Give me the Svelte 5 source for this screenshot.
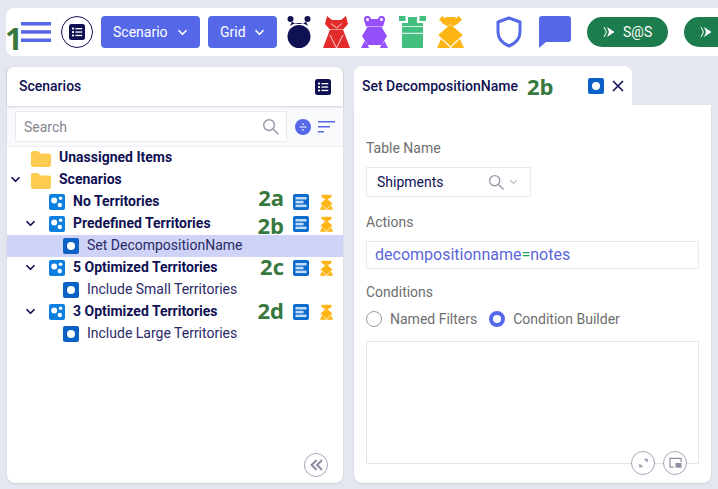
<script>
  const rows = [
    { label: 'Unassigned Items', kind: 'folder', level: 0, bold: true },
    { label: 'Scenarios', kind: 'folder', level: 0, bold: true, open: true },
    { label: 'No Territories', kind: 'group', level: 1, bold: true, tools: true, tag: '2a' },
    { label: 'Predefined Territories', kind: 'group', level: 1, bold: true, open: true, tools: true, tag: '2b' },
    { label: 'Set DecompositionName', kind: 'item', level: 2, selected: true },
    { label: '5 Optimized Territories', kind: 'group', level: 1, bold: true, open: true, tools: true, tag: '2c' },
    { label: 'Include Small Territories', kind: 'item', level: 2 },
    { label: '3 Optimized Territories', kind: 'group', level: 1, bold: true, open: true, tools: true, tag: '2d' },
    { label: 'Include Large Territories', kind: 'item', level: 2 }
  ];
</script>

{#snippet chevron(cls)}
  <svg class={cls} viewBox="0 0 12 8" fill="none" stroke="currentColor" stroke-width="2" stroke-linecap="round" stroke-linejoin="round"><path d="M2 2l4 4 4-4" /></svg>
{/snippet}

{#snippet search(cls)}
  <svg class={cls} viewBox="0 0 18 18" fill="none" stroke="#9b9aa8" stroke-width="1.6" stroke-linecap="round"><circle cx="7.5" cy="7.5" r="5.7" /><path d="M12 12l5 5" /></svg>
{/snippet}

{#snippet listIcon(cls)}
  <svg class={cls} viewBox="0 0 16 16"><rect width="16" height="16" rx="2.5" fill="#0f1153" /><g fill="#fff"><rect x="3" y="3.6" width="2" height="2" rx=".6" /><rect x="3" y="7" width="2" height="2" rx=".6" /><rect x="3" y="10.4" width="2" height="2" rx=".6" /><rect x="6.4" y="4" width="6.8" height="1.3" /><rect x="6.4" y="7.4" width="6.8" height="1.3" /><rect x="6.4" y="10.8" width="6.8" height="1.3" /></g></svg>
{/snippet}

{#snippet orangeFrog(cls)}
  <svg class={cls} viewBox="0 0 27 32" fill="#fdb515">
    <polygon points="5.500,0 9,3.500 5.500,7 2,3.500" />
    <polygon points="21.500,0 25,3.500 21.500,7 18,3.500" />
    <polygon points="9,1 18,1 22,7 13.500,12 5,7" />
    <polygon points="13.500,8 26,19 13.500,30.500 1,19" stroke="#fff" stroke-width=".5" />
    <polygon points="4,23 12.800,31.200 12.800,32 0,32" />
    <polygon points="23,23 14.200,31.200 14.200,32 27,32" />
  </svg>
{/snippet}

{#snippet itemIcon()}
  <svg class="node" viewBox="0 0 16 16"><rect width="16" height="16" rx="2" fill="#0b62c4" /><circle cx="8" cy="8" r="4" fill="#fff" /></svg>
{/snippet}

{#snippet groupIcon()}
  <svg class="node" viewBox="0 0 16 16"><rect width="16" height="16" rx="2" fill="#0b7fe0" /><circle cx="5.2" cy="6.600" r="3" fill="#fff" /><circle cx="11.600" cy="4.200" r="1.800" fill="#fff" /><circle cx="10.800" cy="11" r="2.200" fill="#fff" /></svg>
{/snippet}

{#snippet folderIcon()}
  <svg class="folder" viewBox="0 0 20 16"><path d="M0 2a2 2 0 0 1 2-2h5l2.500 2.500H18a2 2 0 0 1 2 2V14a2 2 0 0 1-2 2H2a2 2 0 0 1-2-2z" fill="#fdcb4f" /></svg>
{/snippet}

{#snippet playIcon()}
  <svg class="play" viewBox="0 0 12 12" fill="#fff"><path d="M4 1l7.500 5L4 11l2-5z" /><path d="M1 1l2.500 5L1 11" fill="none" stroke="#fff" /></svg>
{/snippet}

<div class="page">
  <header class="topbar">
    <svg class="burger" viewBox="0 0 30 20" fill="#5568e8"><rect width="30" height="3.500" /><rect y="8.200" width="30" height="3.500" /><rect y="16.500" width="30" height="3.500" /></svg>
    <span class="list-circle">{@render listIcon('list-lg')}</span>
    <button class="drop scenario">Scenario {@render chevron('drop-chev')}</button>
    <button class="drop grid-btn">Grid {@render chevron('drop-chev')}</button>

    <svg class="piece first" viewBox="0 0 26 32" fill="#0f1153">
      <circle cx="4.500" cy="3" r="3" />
      <circle cx="21.500" cy="3" r="3" />
      <path d="M6 5.500c2 2 4.500 2.500 7 2.500s5-.5 7-2.500l2 4.500c-2.500-2-5.500-3-9-3s-6.500 1-9 3z" />
      <circle cx="13" cy="20.500" r="11.500" />
    </svg>
    <svg class="piece" viewBox="0 0 27 32">
      <polygon fill="#e32b2b" points="4,0 9,4 18,4 23,0 25,8 20.500,13 6.500,13 2,8" />
      <polygon fill="#e32b2b" points="7,13.600 20,13.600 27,32 0,32" />
      <path d="M8 7.500l5.500 4.500 5.500-4.500M7 19l6.500 13 6.500-13" fill="none" stroke="#fff" stroke-width=".8" />
    </svg>
    <svg class="piece" viewBox="0 0 27 32" fill="#9650fb">
      <path d="M3 4a3.500 3.500 0 0 1 7-1h7a3.500 3.500 0 0 1 7 1l-2 6.500H5z" />
      <circle cx="6.500" cy="3.500" r="1.500" fill="#fff" />
      <circle cx="20.500" cy="3.500" r="1.500" fill="#fff" />
      <polygon points="6.500,11 20.500,11 26,20 20.500,29 6.500,29 1,20" />
      <polygon points="3.500,25 7,29.500 8,32 0,32" />
      <polygon points="23.500,25 20,29.500 19,32 27,32" />
    </svg>
    <svg class="piece" viewBox="0 0 27 32" fill="#43bf80"><rect width="6.500" height="5" /><rect x="9" y="1" width="9" height="6" /><rect x="20.500" width="6.500" height="5" /><rect x="3" y="7" width="21" height="3" /><rect x="3" y="10.800" width="21" height="6" /><rect x="3" y="17.800" width="21" height="14.200" /></svg>
    {@render orangeFrog('piece')}

    <svg class="shield" viewBox="0 0 26 32" fill="none" stroke="#5568e8" stroke-width="3"><path d="M13 2l11 4v10c0 7-5 11.500-11 14C7 27.500 2 23 2 16V6z" stroke-linejoin="round" /></svg>
    <svg class="chat" viewBox="0 0 32 32" fill="#5568e8"><path d="M3 0h26a3 3 0 0 1 3 3v20a3 3 0 0 1-3 3H7l-7 6V3a3 3 0 0 1 3-3z" /></svg>

    <button class="pill">{@render playIcon()} S@S</button>
    <button class="pill" aria-label="S@S">{@render playIcon()}</button>
    <span class="note note-1">1</span>
  </header>

  <main class="main">
    <section class="left">
      <div class="left-head">
        <h2>Scenarios</h2>
        {@render listIcon('list-sm')}
      </div>
      <div class="search-row">
        <div class="search-box">
          <span>Search</span>
          {@render search('search-ico')}
        </div>
        <svg class="expand" viewBox="0 0 16 16"><circle cx="8" cy="8" r="8" fill="#5568e8" /><path d="M4.500 8h7" stroke="#fff" /><path d="M6.500 5.500L8 4l1.500 1.500zM6.500 10.500L8 12l1.500-1.500z" fill="#fff" /></svg>
        <svg class="sort" viewBox="0 0 17 12" fill="#5568e8"><rect width="17" height="1.500" /><rect y="5" width="12" height="1.500" /><rect y="10" width="6" height="1.500" /></svg>
      </div>

      <div class="tree">
        {#each rows as r}
          <div class={['row', 'lv' + r.level, r.selected && 'selected']}>
            <span class="twist">{#if r.open}{@render chevron('tree-chev')}{/if}</span>
            {#if r.kind === 'folder'}{@render folderIcon()}{:else if r.kind === 'group'}{@render groupIcon()}{:else}{@render itemIcon()}{/if}
            <span class={['label', r.bold && 'bold']}>{r.label}</span>
            {#if r.tools}
              <span class={['note', 'tag', 'tag-' + r.tag]}>{r.tag}</span>
              <svg class="doc" viewBox="0 0 16 16"><rect width="16" height="16" rx="2" fill="#0b6ccc" /><rect x="2.500" y="3" width="11" height="2.500" fill="#c4dbf6" /><rect x="2.500" y="6.800" width="8" height="2.500" fill="#c4dbf6" /><rect x="2.500" y="10.600" width="11" height="2.500" fill="#c4dbf6" /></svg>
              {@render orangeFrog('mini')}
            {/if}
          </div>
        {/each}
      </div>

      <button class="round collapse" aria-label="Collapse">
        <svg viewBox="0 0 12 10" fill="none" stroke="#8f8ea6" stroke-width="2" stroke-linecap="round"><path d="M5.500 1L1.500 5l4 4M10.500 1l-4 4 4 4" /></svg>
      </button>
    </section>

    <section class="right">
      <div class="tab">
        <span class="tab-title">Set DecompositionName</span>
        <span class="note tab-note">2b</span>
        <svg class="tab-node" viewBox="0 0 16 16"><rect width="16" height="16" rx="2" fill="#0b62c4" /><circle cx="8" cy="8" r="4" fill="#fff" /></svg>
        <svg class="close" viewBox="0 0 12 12" stroke="#0f1153" stroke-width="1.600"><path d="M1 1l10 10M11 1L1 11" /></svg>
      </div>
      <div class="form">
        <div class="flabel first-label">Table Name</div>
        <div class="select">
          <span>Shipments</span>
          {@render search('select-search')}
          {@render chevron('select-chev')}
        </div>
        <div class="flabel actions-label">Actions</div>
        <div class="action">decompositionname<span class="eq">=</span>notes</div>
        <div class="flabel cond-label">Conditions</div>
        <div class="radios">
          <span class="radio"></span><span class="rtext">Named Filters</span>
          <span class="radio on"></span><span class="rtext">Condition Builder</span>
        </div>
        <div class="builder">
          <div class="builder-tools">
            <button class="round" aria-label="Expand">
              <svg viewBox="0 0 12 12" fill="none" stroke="#8f8ea6" stroke-width="1.400"><path d="M7 2.500h2.500V5M5 9.500H2.500V7" /></svg>
            </button>
            <button class="round" aria-label="Picture in picture">
              <svg viewBox="0 0 14 12" fill="none" stroke="#8f8ea6" stroke-width="1.300"><path d="M5 10.500H1V1h12v4" /><rect x="7" y="6" width="6.500" height="5" fill="#8f8ea6" stroke="none" /></svg>
            </button>
          </div>
        </div>
      </div>
    </section>
  </main>
</div>

<style>
  :global(body) {
    margin: 0;
    background: #e4e7ef;
  }
  .page {
    width: 718px;
    height: 489px;
    overflow: hidden;
    background: #e4e7ef;
    padding-top: 8px;
    box-sizing: border-box;
    font-family: Roboto, "Liberation Sans", sans-serif;
  }
  button {
    font-family: inherit;
    border: 0;
    padding: 0;
    margin: 0;
    cursor: pointer;
  }
  .topbar {
    position: relative;
    margin-left: 6px;
    height: 48px;
    background: #fff;
    border-radius: 8px 0 0 8px;
    display: flex;
    align-items: center;
    padding-left: 15px;
    white-space: nowrap;
  }
  .burger {
    width: 30px;
    height: 20px;
    flex: none;
  }
  .list-circle {
    flex: none;
    box-sizing: border-box;
    width: 32px;
    height: 32px;
    margin-left: 10px;
    border: 1.500px solid #0f1153;
    border-radius: 50%;
    display: flex;
    align-items: center;
    justify-content: center;
  }
  .list-lg {
    width: 16px;
    height: 16px;
  }
  .drop {
    flex: none;
    height: 32px;
    margin-left: 8px;
    background: #5568e8;
    color: #fff;
    border-radius: 4px;
    font-size: 14px;
    display: flex;
    align-items: center;
    justify-content: space-between;
    box-sizing: border-box;
    padding: 0 12px;
  }
  .scenario {
    width: 99px;
  }
  .grid-btn {
    width: 69px;
  }
  .drop-chev {
    width: 11px;
    height: 7px;
  }
  .piece {
    flex: none;
    width: 27px;
    height: 32px;
    margin-left: 11px;
  }
  .piece.first {
    width: 26px;
    margin-left: 9px;
  }
  .shield {
    flex: none;
    width: 26px;
    height: 32px;
    margin-left: 32px;
  }
  .chat {
    flex: none;
    width: 32px;
    height: 32px;
    margin-left: 17px;
  }
  .pill {
    flex: none;
    width: 81px;
    height: 30px;
    margin-left: 16px;
    border-radius: 15px;
    background: #1d7c4d;
    color: #fff;
    font-size: 14px;
    display: flex;
    align-items: center;
    gap: 8px;
    padding-left: 16px;
    box-sizing: border-box;
  }
  .play {
    width: 12px;
    height: 12px;
  }
  .note {
    font-family: "Open Sans", "DejaVu Sans", sans-serif;
    font-weight: 700;
    color: #37783f;
  }
  .note-1 {
    position: absolute;
    left: -1px;
    top: 12px;
    font-size: 31px;
    line-height: 36px;
  }
  .main {
    display: flex;
    align-items: flex-start;
    gap: 11px;
    margin: 10px 0 0 7px;
  }
  .left {
    position: relative;
    flex: none;
    width: 336px;
    height: 416px;
    margin-top: 1px;
    background: #fff;
    border-radius: 8px;
    box-shadow: 0 1px 2px rgba(30, 30, 80, 0.12);
  }
  .left-head {
    height: 39px;
    display: flex;
    align-items: center;
    justify-content: space-between;
    padding: 0 12px;
    box-shadow: 0 1px 2px rgba(30, 30, 80, 0.18);
    position: relative;
  }
  h2 {
    margin: 0 0 1px;
    font-size: 14px;
    font-weight: 500;
    color: #0f1153;
  }
  .list-sm {
    width: 16px;
    height: 16px;
    margin-top: 1px;
  }
  .search-row {
    height: 41px;
    background: #f9fafc;
    border-bottom: 1px solid #eef0f4;
    display: flex;
    align-items: center;
    box-sizing: border-box;
    padding: 1px 0 0 8px;
  }
  .search-box {
    box-sizing: border-box;
    width: 272px;
    height: 31px;
    background: #fff;
    border: 1px solid #e8eaef;
    display: flex;
    align-items: center;
    justify-content: space-between;
    padding: 0 7px 0 8px;
    font-size: 14px;
    color: #85858f;
  }
  .search-ico {
    width: 17px;
    height: 17px;
  }
  .expand {
    width: 16px;
    height: 16px;
    margin-left: 8px;
  }
  .sort {
    width: 17px;
    height: 12px;
    margin-left: 7px;
  }
  .row {
    height: 22px;
    display: flex;
    align-items: center;
    font-size: 14px;
    color: #0f1153;
    box-sizing: border-box;
  }
  .row.selected {
    background: #ced3f7;
  }
  .twist {
    flex: none;
    width: 11px;
    height: 8px;
    display: flex;
    margin-right: 13px;
  }
  .tree-chev {
    width: 11px;
    height: 7px;
  }
  .lv0 {
    padding-left: 3px;
  }
  .lv0 .twist {
    margin-right: 10px;
  }
  .lv1 {
    padding-left: 18px;
  }
  .lv2 {
    padding-left: 32px;
  }
  .folder {
    flex: none;
    width: 20px;
    height: 16px;
    margin-top: 2px;
  }
  .node {
    flex: none;
    width: 16px;
    height: 16px;
  }
  .lv2 .twist {
    margin-right: 13px;
  }
  .label {
    margin: -2px 0 0 8px;
    flex: 1;
    white-space: nowrap;
    color: #2a2a66;
  }
  .label.bold {
    font-weight: 700;
    color: #0f1153;
  }
  .tag {
    font-size: 22px;
    line-height: 16px;
    margin-right: 9px;
  }
  .tag-2a {
    margin-top: -10px;
  }
  .tag-2b {
    margin-top: 2px;
  }
  .tag-2c,
  .tag-2d {
    margin-top: -4px;
  }
  .doc {
    flex: none;
    width: 16px;
    height: 16px;
  }
  .mini {
    flex: none;
    width: 13px;
    height: 16px;
    margin: 0 10px 0 11px;
  }
  .round {
    width: 24px;
    height: 24px;
    box-sizing: border-box;
    border-radius: 50%;
    border: 1.500px solid #a5a4b8;
    background: #fff;
    display: flex;
    align-items: center;
    justify-content: center;
  }
  .round svg {
    width: 13px;
    height: 12px;
  }
  .collapse {
    position: absolute;
    right: 15px;
    bottom: 6px;
  }
  .right {
    flex: none;
    width: 357px;
  }
  .tab {
    width: 278px;
    height: 39px;
    box-sizing: border-box;
    background: #fff;
    border-radius: 8px 8px 0 0;
    display: flex;
    align-items: center;
    padding-left: 8px;
  }
  .tab-title {
    font-size: 14px;
    font-weight: 500;
    color: #0f1153;
    width: 165px;
    white-space: nowrap;
  }
  .tab-note {
    font-size: 22px;
    line-height: 24px;
    width: 61px;
  }
  .tab-node {
    width: 16px;
    height: 16px;
  }
  .close {
    width: 12px;
    height: 12px;
    margin-left: 8px;
  }
  .form {
    height: 378px;
    background: #fff;
    border-radius: 0 0 8px 8px;
    box-sizing: border-box;
    padding: 33px 12px 0;
    box-shadow: 0 1px 2px rgba(30, 30, 80, 0.12);
  }
  .flabel {
    font-size: 14px;
    line-height: 20px;
    color: #6e6e6e;
  }
  .select {
    box-sizing: border-box;
    width: 165px;
    height: 30px;
    margin-top: 9px;
    border: 1px solid #e8eaef;
    display: flex;
    align-items: center;
    padding-left: 10px;
    font-size: 14px;
    color: #0f1153;
  }
  .select span {
    flex: 1;
  }
  .select-search {
    width: 16px;
    height: 16px;
  }
  .select-chev {
    width: 9px;
    height: 6px;
    margin: 0 12px 0 5px;
    color: #c7c7cf;
  }
  .actions-label {
    margin-top: 15px;
  }
  .action {
    box-sizing: border-box;
    width: 333px;
    height: 28px;
    margin-top: 9px;
    border: 1px solid #e8eaef;
    padding-left: 8px;
    font-size: 16px;
    line-height: 26px;
    color: #5b66d9;
  }
  .eq {
    color: #1f9d55;
  }
  .cond-label {
    margin-top: 13px;
  }
  .radios {
    display: flex;
    align-items: center;
    margin-top: 7px;
    height: 20px;
    font-size: 14px;
    color: #6e6e6e;
  }
  .radio {
    box-sizing: border-box;
    width: 16px;
    height: 16px;
    border-radius: 50%;
    border: 1px solid #9b9b9b;
  }
  .radio.on {
    border: 4px solid #5568e8;
  }
  .rtext {
    margin: 0 12px 0 8px;
  }
  .builder {
    position: relative;
    box-sizing: border-box;
    width: 333px;
    height: 123px;
    margin-top: 12px;
    border: 1px solid #e4e6ec;
  }
  .builder-tools {
    position: absolute;
    right: 11px;
    bottom: -12px;
    display: flex;
    gap: 8px;
  }
</style>
